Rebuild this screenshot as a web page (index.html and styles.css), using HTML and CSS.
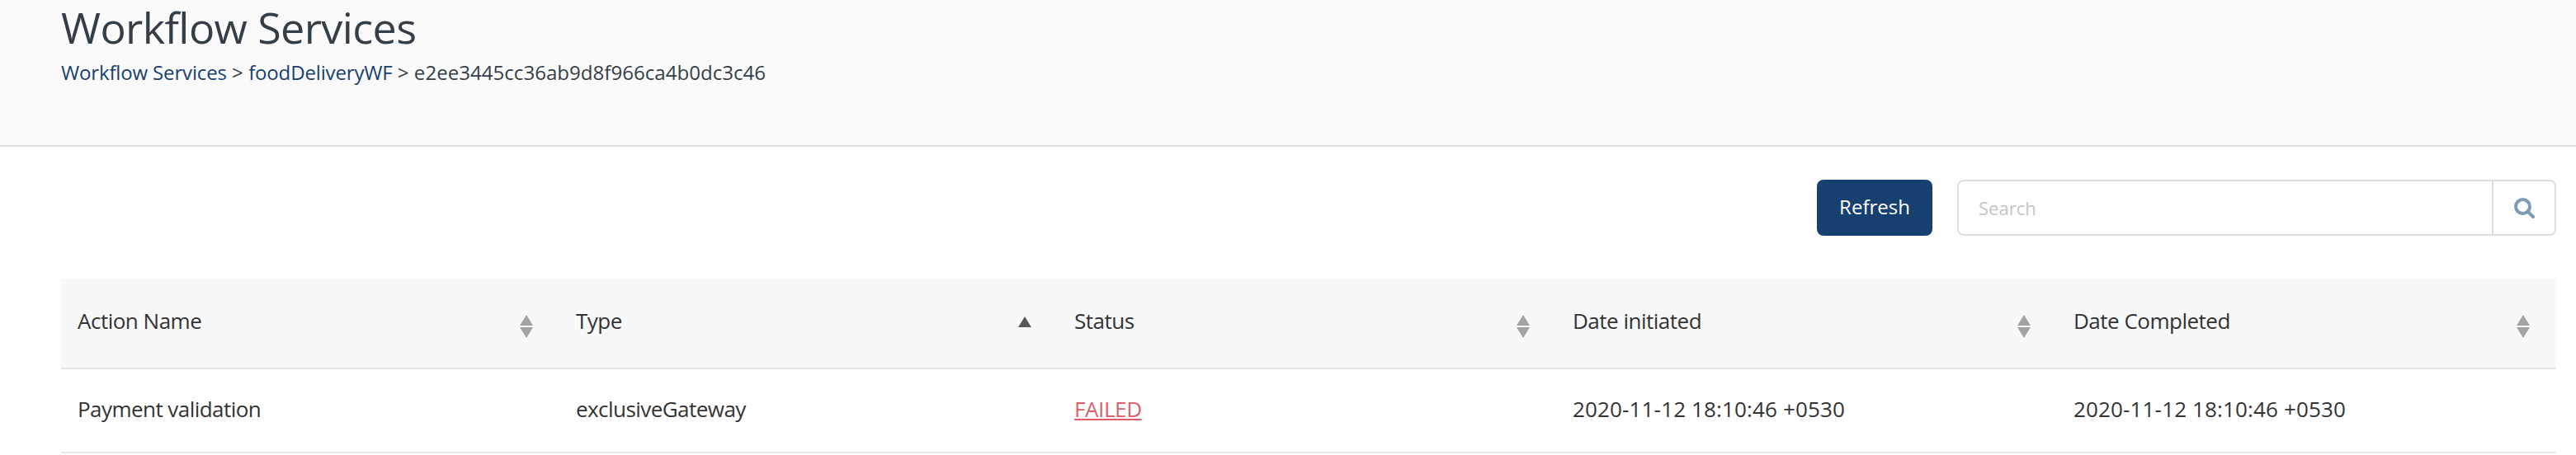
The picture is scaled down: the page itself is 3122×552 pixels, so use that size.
FILE: index.html
```html
<!DOCTYPE html>
<html lang="en">
<head>
    <meta charset="UTF-8">
    <meta name="viewport" content="width=device-width, initial-scale=1.0">
    <title>Workflow Services</title>
    <link rel="stylesheet" href="styles.css">
</head>
<body>
    <div class="page-header">
        <h1>Workflow Services</h1>
        <div class="crumbs">
            <a href="#">Workflow Services</a> &gt; <a href="#">foodDeliveryWF</a> &gt; e2ee3445cc36ab9d8f966ca4b0dc3c46
        </div>
    </div>

    <div class="content">
        <!-- Refresh and search -->
        <div class="toolbar">
            <button class="refresh">Refresh</button>
            <div class="search">
                <input type="text" placeholder="Search">
                <span class="search-btn">
                    <svg width="26" height="26" viewBox="0 0 26 26">
                        <circle cx="11.5" cy="11.5" r="8.5" fill="none" stroke="#7f9ab5" stroke-width="4"/>
                        <path d="M17.5 17.5L24 24" fill="none" stroke="#7f9ab5" stroke-width="4" stroke-linecap="round"/>
                    </svg>
                </span>
            </div>
        </div>

        <table class="actions">
            <colgroup>
                <col class="col-a">
                <col class="col-a">
                <col class="col-a">
                <col class="col-b">
                <col class="col-c">
            </colgroup>
            <thead>
                <tr>
                    <th><div class="th-inner">Action Name <span class="sort"></span></div></th>
                    <th><div class="th-inner">Type <span class="sort-up"></span></div></th>
                    <th><div class="th-inner">Status <span class="sort"></span></div></th>
                    <th><div class="th-inner">Date initiated <span class="sort"></span></div></th>
                    <th><div class="th-inner">Date Completed <span class="sort"></span></div></th>
                </tr>
            </thead>
            <tbody>
                <tr>
                    <td>Payment validation</td>
                    <td>exclusiveGateway</td>
                    <td><a class="failed" href="#">FAILED</a></td>
                    <td class="date">2020-11-12 18:10:46 +0530</td>
                    <td class="date">2020-11-12 18:10:46 +0530</td>
                </tr>
            </tbody>
        </table>
    </div>
</body>
</html>
```

FILE: styles.css
```css
body {
    margin: 0;
    background: #fff;
    color: #333;
    font-family: "Open Sans", "Noto Sans", sans-serif;
    font-size: 26px;
    overflow: hidden;
}
a {
    color: #173f6f;
    text-decoration: none;
}
.page-header {
    height: 176px;
    padding-left: 74px;
    background: #fafafa;
    border-bottom: 2px solid #ddd;
}
h1 {
    margin: 0;
    font-size: 52px;
    font-weight: 400;
    line-height: 66px;
    letter-spacing: -0.6px;
    color: #343e48;
}
.crumbs {
    margin-top: 5px;
    font-size: 24px;
    line-height: 34px;
    letter-spacing: 0.05px;
    color: #343e48;
}
.crumbs a {
    letter-spacing: -0.15px;
}
.content {
    padding: 40px 24px 0 74px;
}
.toolbar {
    display: flex;
    justify-content: flex-end;
    gap: 30px;
    height: 68px;
    margin-bottom: 52px;
}
.refresh {
    width: 140px;
    padding: 0 0 4px 0;
    border: 0;
    border-radius: 8px;
    background: #173f6f;
    color: #fff;
    font-family: inherit;
    font-size: 24px;
}
.search {
    display: flex;
    width: 726px;
    box-sizing: border-box;
    border: 2px solid #ddd;
    border-radius: 8px;
}
.search input {
    flex: 1;
    min-width: 0;
    padding: 0 24px;
    border: 0;
    border-right: 2px solid #ddd;
    outline: none;
    background: transparent;
    font-family: inherit;
    font-size: 22px;
}
.search input::placeholder {
    color: #c4c4c4;
}
.search-btn {
    display: flex;
    flex: 0 0 74px;
    align-items: center;
    justify-content: center;
}
.actions {
    width: 3024px;
    table-layout: fixed;
    border-collapse: separate;
    border-spacing: 0;
}
.col-a {
    width: 604px;
}
.col-b {
    width: 607px;
}
.col-c {
    width: 605px;
}
th {
    box-sizing: border-box;
    height: 110px;
    padding: 0 0 6px 20px;
    background: #f7f8fa;
    border-bottom: 2px solid #e6e6e6;
    font-weight: 400;
    letter-spacing: -0.5px;
    text-align: left;
}
.th-inner {
    display: flex;
    align-items: center;
    justify-content: space-between;
    padding-right: 32px;
}
td {
    box-sizing: border-box;
    height: 102px;
    padding: 0 0 4px 20px;
    border-bottom: 2px solid #e6e6e6;
    letter-spacing: -0.55px;
}
td.date {
    letter-spacing: 0.15px;
}
.sort {
    display: flex;
    flex-direction: column;
    gap: 2px;
    width: 16px;
    margin-top: 14px;
}
.sort::before,
.sort::after {
    content: "";
    width: 0;
    height: 0;
    border-left: 8px solid transparent;
    border-right: 8px solid transparent;
}
.sort::before {
    border-bottom: 13px solid #a3a3a3;
}
.sort::after {
    border-top: 13px solid #a3a3a3;
}
.sort-up {
    width: 0;
    height: 0;
    margin-top: 2px;
    border-left: 8px solid transparent;
    border-right: 8px solid transparent;
    border-bottom: 13px solid #585858;
}
a.failed {
    color: #e05c6a;
    text-decoration: underline;
    letter-spacing: -0.4px;
}
```
